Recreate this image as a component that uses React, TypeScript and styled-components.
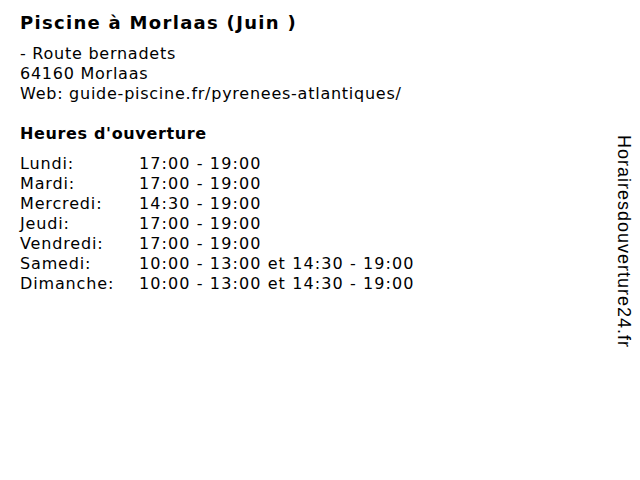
import React from "react";
import styled, { createGlobalStyle } from "styled-components";

const Global = createGlobalStyle`
  html, body { margin: 0; padding: 0; background: #fff; }
  body { width: 640px; height: 480px; overflow: hidden; }
`;

const Page = styled.div`
  display: flex;
  justify-content: space-between;
  width: 640px;
  height: 480px;
  color: #000;
  font-family: "DejaVu Sans", Verdana, sans-serif;
`;

const Main = styled.div`
  padding: 12px 0 0 20px;
  display: flex;
  flex-direction: column;
`;

const Title = styled.h1`
  margin: 0;
  font-size: 18px;
  font-weight: bold;
  line-height: 22px;
  letter-spacing: 1.3px;
`;

const Address = styled.div`
  margin-top: 10px;
  font-size: 16px;
  line-height: 20px;
  letter-spacing: 0.75px;
`;

const Heading = styled.h2`
  margin: 20px 0 0;
  font-size: 16px;
  font-weight: bold;
  line-height: 20px;
  letter-spacing: 0.65px;
`;

const Hours = styled.div`
  margin-top: 10px;
  display: grid;
  grid-template-columns: 119px auto;
  font-size: 16px;
  line-height: 20px;
`;

const Day = styled.span`
  letter-spacing: 0.85px;
`;

const Time = styled.span`
  letter-spacing: 1.1px;
`;

const Side = styled.div`
  writing-mode: vertical-rl;
  font-family: "Liberation Sans", Arial, sans-serif;
  font-size: 18px;
  letter-spacing: 1px;
  margin: 135px 6px 0 0;
  align-self: flex-start;
`;

const rows: [string, string][] = [
  ["Lundi:", "17:00 - 19:00"],
  ["Mardi:", "17:00 - 19:00"],
  ["Mercredi:", "14:30 - 19:00"],
  ["Jeudi:", "17:00 - 19:00"],
  ["Vendredi:", "17:00 - 19:00"],
  ["Samedi:", "10:00 - 13:00 et 14:30 - 19:00"],
  ["Dimanche:", "10:00 - 13:00 et 14:30 - 19:00"],
];

export default function App() {
  return (
    <>
      <Global />
      <Page>
        <Main>
          <Title>Piscine à Morlaas (Juin )</Title>
          <Address>
            - Route bernadets
            <br />
            64160 Morlaas
            <br />
            Web: guide-piscine.fr/pyrenees-atlantiques/
          </Address>
          <Heading>Heures d'ouverture</Heading>
          <Hours>
            {rows.map(([d, h]) => (
              <React.Fragment key={d}>
                <Day>{d}</Day>
                <Time>{h}</Time>
              </React.Fragment>
            ))}
          </Hours>
        </Main>
        <Side>Horairesdouverture24.fr</Side>
      </Page>
    </>
  );
}
